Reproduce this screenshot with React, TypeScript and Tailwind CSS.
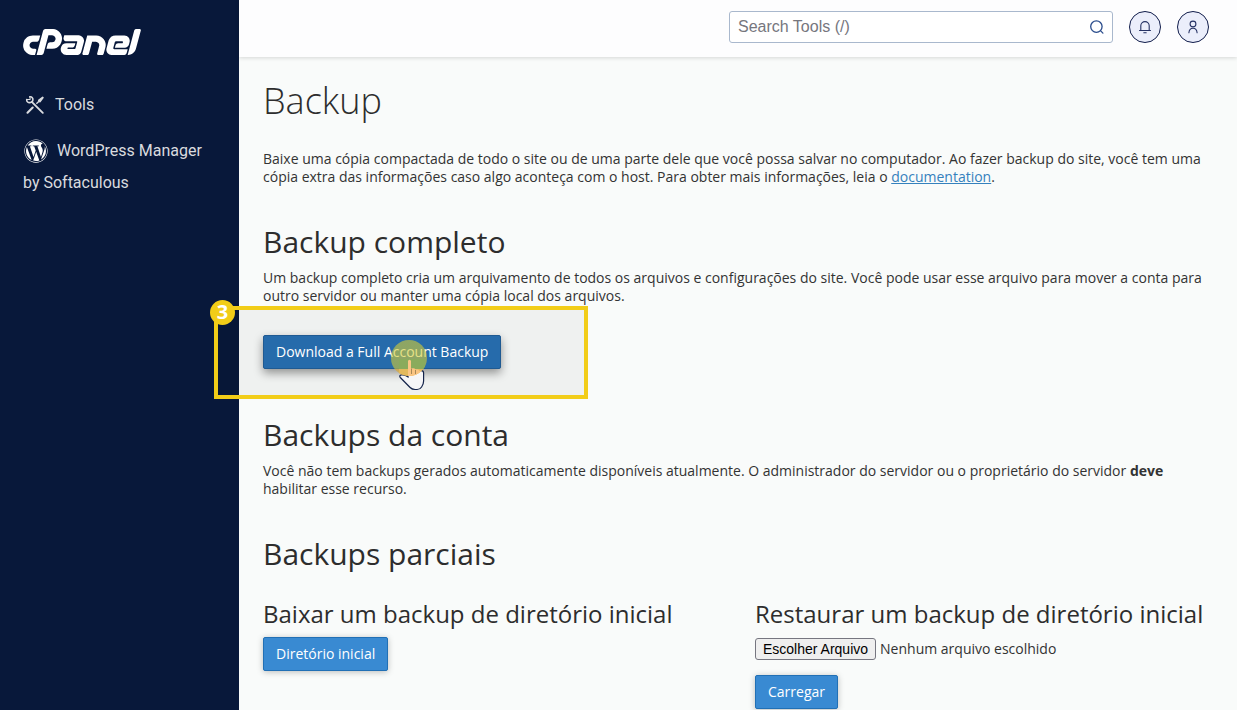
import type { ReactNode } from "react";
import { SiCpanel } from "react-icons/si";
import { FaWordpress } from "react-icons/fa";

function ToolsIcon() {
  return (
    <svg viewBox="0 0 20 20" className="h-5 w-5 shrink-0" fill="none" stroke="currentColor" aria-hidden="true">
      <path d="M4.800 1.800C6.900 1.500 8.400 3.300 7.800 5.400L7.100 7.100 5.200 7.600C3.200 8 1.400 6.600 1.700 4.500" strokeWidth="1.600" strokeLinecap="round" strokeLinejoin="round" />
      <path d="M4.800 1.800 5.300 4.500 1.700 4.500" strokeWidth="1" strokeLinejoin="round" />
      <path d="M6.800 6.800 17.800 17.800" strokeWidth="1.900" strokeLinecap="round" />
      <path d="M2.500 17.700 7.700 12.500" strokeWidth="2.100" strokeLinecap="round" />
      <path d="M11.400 8.800 14 6.200" strokeWidth="1.400" />
      <path d="M13.600 5.200 17.600 2.200 18.100 2.700 15.100 6.700 14.200 6.600Z" fill="currentColor" strokeWidth="1.400" strokeLinejoin="round" />
    </svg>
  );
}

function SearchIcon() {
  return (
    <svg viewBox="0 0 16 16" className="h-4 w-4" fill="none" stroke="currentColor" strokeWidth="1.300" strokeLinecap="round" aria-hidden="true">
      <circle cx="7.400" cy="7.600" r="5.700" />
      <path d="m11.700 11.900 2.200 2.200" />
    </svg>
  );
}

function BellIcon() {
  return (
    <svg viewBox="0 0 16 16" className="h-4 w-4" fill="none" stroke="currentColor" strokeWidth="1.100" strokeLinecap="round" strokeLinejoin="round" aria-hidden="true">
      <path d="M3.800 11.500V6.800a4.200 4.200 0 0 1 8.400 0v4.700M2.500 11.500h11M6.800 13.700h2.400" />
    </svg>
  );
}

function UserIcon() {
  return (
    <svg viewBox="0 0 16 16" className="h-4 w-4" fill="none" stroke="currentColor" strokeWidth="1.100" strokeLinecap="round" aria-hidden="true">
      <circle cx="8" cy="5" r="2.900" />
      <path d="M3.900 13.700C4.200 10.600 5.700 9.300 8 9.300s3.800 1.300 4.100 4.400" />
    </svg>
  );
}

function HandPointer() {
  return (
    <svg viewBox="0 0 26 32" className="absolute top-6 left-[136px] h-8 w-[26px]" aria-hidden="true">
      <defs>
        <clipPath id="lit">
          <circle cx="10" cy="-1" r="18" />
        </clipPath>
      </defs>
      <path
        d="M9 18V2.200a1.500 1.500 0 0 1 3 0V9.300h2.700a1.500 1.500 0 0 1 1.500 1.200h2.300a1.500 1.500 0 0 1 1.500 1.200h2.300a2.300 2.300 0 0 1 2.300 2.300V22c0 2-.6 4-2 6-1 1.600-2.600 2.500-4.500 2.500h-2c-2 0-3.700-.6-5-2L1.300 18.500c-1-1.200-.4-2.400 1-2.600 1.700-.3 3.200 0 4.700.8Z"
        fill="#f6f6f8"
        stroke="#14234a"
        strokeWidth="1.200"
      />
      <g clipPath="url(#lit)">
        <rect width="26" height="10" fill="#8aab5c" />
        <rect y="10" width="26" height="10" fill="#e3b95c" />
        <path
          d="M9 20V2.200a1.500 1.500 0 0 1 3 0V9.300h2.700a1.500 1.500 0 0 1 1.500 1.200h2.300a1.500 1.500 0 0 1 1.500 1.200h4V20Z"
          fill="#fbc584"
        />
        <path d="M12.500 9.500V15M16.500 11V15" stroke="#a98a58" strokeWidth="1" />
      </g>
    </svg>
  );
}

function ActionButton({ children }: { children: ReactNode }) {
  return (
    <button
      type="button"
      className="h-[34px] rounded-[2px] border border-[#2170b5] bg-[#398ad2] px-3 text-sm leading-5 text-white shadow-[0_1px_6px_rgba(0,0,0,0.25)]"
    >
      {children}
    </button>
  );
}

function SectionTitle({ children }: { children: ReactNode }) {
  return <h2 className="text-[30px] leading-[34px] text-[#2d2d2d]">{children}</h2>;
}

export default function App() {
  return (
    <div className="flex min-h-screen bg-[#f9fbfa] font-['Open_Sans',sans-serif] text-sm leading-[18px] text-[#333]">
      <aside className="w-[239px] shrink-0 bg-[#08183a] pt-[29px] pl-[23px] font-['Roboto',sans-serif] text-base leading-8 text-[#d9dbdf]">
        <a href="#home" aria-label="cPanel" className="block text-white">
          <SiCpanel viewBox="0 9.350 24 5.300" className="h-[26px] w-[118px]" />
        </a>
        <nav className="mt-[34px]">
          <a href="#tools" className="flex items-center gap-[10px] pl-[2px]">
            <ToolsIcon />
            Tools
          </a>
          <a href="#wordpress" className="mt-[14px] block">
            <FaWordpress className="mr-[9px] ml-px inline h-6 w-6 align-[-7px] text-white" />
            WordPress Manager
            <br />
            by Softaculous
          </a>
        </nav>
      </aside>

      <div className="min-w-0 flex-1">
        <header className="flex h-[57px] items-start justify-end gap-4 bg-[#fdfdfe] pt-[11px] pr-7 shadow-[0_1px_4px_rgba(0,0,0,0.15)]">
          <div className="flex h-8 w-96 items-center rounded-[3px] border border-[#a9b8cd] bg-white pr-[7px] pl-2 text-[#2a4c8c]">
            <input
              type="text"
              aria-label="Search Tools"
              placeholder="Search Tools (/)"
              className="min-w-0 flex-1 bg-transparent font-['Liberation_Sans',sans-serif] text-base outline-none placeholder:text-[#76767e]"
            />
            <SearchIcon />
          </div>
          <button type="button" aria-label="Notifications" className="flex h-8 w-8 items-center justify-center rounded-full border border-[#101c4a] bg-[#ebeefb] text-[#263264]">
            <BellIcon />
          </button>
          <button type="button" aria-label="User" className="flex h-8 w-8 items-center justify-center rounded-full border border-[#101c4a] bg-[#ebeefb] text-[#263264]">
            <UserIcon />
          </button>
        </header>

        <main className="pt-[21px] pr-5 pl-6">
          <h1 className="text-4xl leading-[46px] font-light text-[#2d2d2d]">Backup</h1>
          <p className="mt-[26px]">
            Baixe uma cópia compactada de todo o site ou de uma parte dele que você possa salvar no computador. Ao fazer
            backup do site, você tem uma cópia extra das informações caso algo aconteça com o host. Para obter mais
            informações, leia o{" "}
            <a href="#documentation" className="text-[#3581bd] underline">
              documentation
            </a>
            .
          </p>

          <section className="mt-[39px]">
            <SectionTitle>Backup completo</SectionTitle>
            <p className="mt-[10px]">
              Um backup completo cria um arquivamento de todos os arquivos e configurações do site. Você pode usar esse
              arquivo para mover a conta para outro servidor ou manter uma cópia local dos arquivos.
            </p>
            <div className="relative mt-[30px] w-fit">
              <div className="absolute -top-[29px] -left-[49px] h-[93px] w-[374px] border-4 border-[#f2cd18] bg-black/4">
                <span className="absolute -top-[10px] -left-2 flex h-[25px] w-[25px] items-center justify-center rounded-full bg-[#f2cd18] pb-px text-xl font-bold text-white">
                  3
                </span>
              </div>
              <button
                type="button"
                className="relative h-[34px] rounded-[2px] border border-[#1f5a92] bg-[#266bab] px-3 text-sm leading-5 text-white shadow-[0_4px_10px_rgba(0,0,0,0.4)]"
              >
                Download a Full Account Backup
              </button>
              <span className="absolute top-[5px] left-32 h-9 w-9 rounded-full bg-[linear-gradient(#d4cd34_80%,#e0a828_80%)] opacity-60" />
              <HandPointer />
            </div>
          </section>

          <section className="mt-[49px]">
            <SectionTitle>Backups da conta</SectionTitle>
            <p className="mt-[10px]">
              Você não tem backups gerados automaticamente disponíveis atualmente. O administrador do servidor ou o
              proprietário do servidor <strong>deve</strong> habilitar esse recurso.
            </p>
          </section>

          <section className="mt-[39px]">
            <SectionTitle>Backups parciais</SectionTitle>
            <div className="mt-7 grid grid-cols-2 gap-[30px]">
              <div>
                <h3 className="mb-2 text-2xl leading-[30px] text-[#2d2d2d]">Baixar um backup de diretório inicial</h3>
                <ActionButton>Diretório inicial</ActionButton>
              </div>
              <form onSubmit={(event) => event.preventDefault()}>
                <h3 className="mb-2 text-2xl leading-[30px] text-[#2d2d2d]">Restaurar um backup de diretório inicial</h3>
                <div className="relative mb-[15px] flex items-center gap-1 pt-px">
                  <input id="backup-file" type="file" className="sr-only" />
                  <label
                    htmlFor="backup-file"
                    className="h-[22px] rounded-[3px] border border-[#767680] bg-[#efefef] px-[7px] font-['Liberation_Sans',sans-serif] leading-5 text-black"
                  >
                    Escolher Arquivo
                  </label>
                  <span>Nenhum arquivo escolhido</span>
                </div>
                <ActionButton>Carregar</ActionButton>
              </form>
            </div>
          </section>
        </main>
      </div>
    </div>
  );
}
